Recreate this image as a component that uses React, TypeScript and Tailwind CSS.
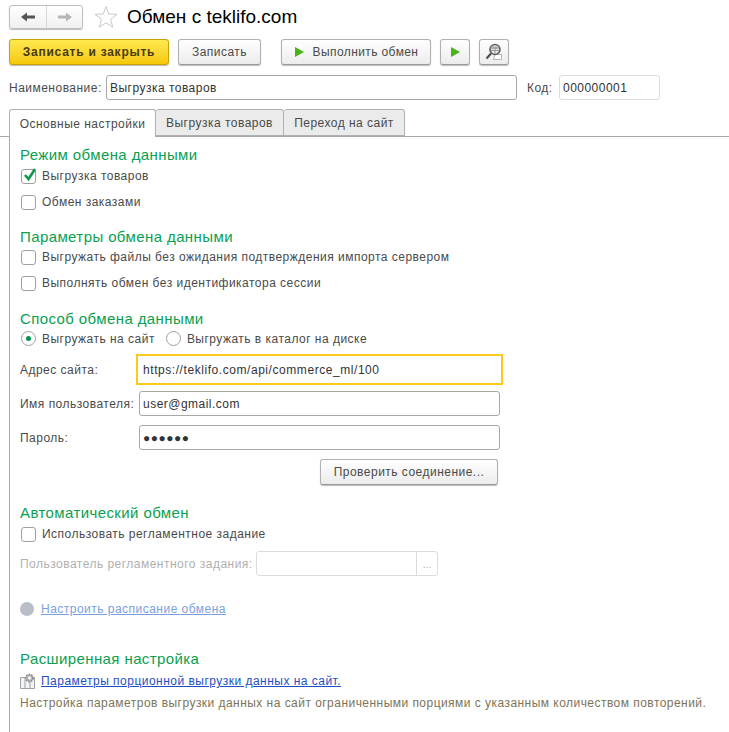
import { ReactNode } from "react";

function Btn({ w, className = "", children }: { w: string; className?: string; children: ReactNode }) {
  return (
    <div className={`${w} h-[26px] flex items-center justify-center rounded-[3px] border border-[#b0b0b0] border-b-[#999] bg-gradient-to-b from-white to-[#ececec] shadow-[0_1px_1px_#bbb] text-[#4a4a4a] ${className}`}>
      {children}
    </div>
  );
}

function Play() {
  return (
    <svg width="11" height="12" viewBox="0 0 11 12">
      <path d="M1 1 L10 6 L1 11 Z" fill="#4cb217" />
    </svg>
  );
}

function Check({ label, checked = false }: { label: string; checked?: boolean }) {
  return (
    <div className="flex items-center h-[14px] text-[#4a4a4a]">
      <div className="relative w-[15px] h-[15px] rounded-[3px] border border-[#a0a0a0] bg-white mr-[6px]">
        {checked && (
          <svg className="absolute left-[1px] top-[-3px]" width="14" height="15" viewBox="0 0 14 15">
            <path d="M2 8 L5.5 12 L12 2" fill="none" stroke="#0b9a4a" strokeWidth="2.6" />
          </svg>
        )}
      </div>
      <span>{label}</span>
    </div>
  );
}

function Radio({ label, on = false }: { label: string; on?: boolean }) {
  return (
    <div className="flex items-center text-[#4a4a4a]">
      <div className="w-[15px] h-[15px] rounded-full border border-[#a0a0a0] bg-white mr-[6px] flex items-center justify-center">
        {on && <div className="w-[5px] h-[5px] rounded-full bg-[#0b8f50]" />}
      </div>
      <span>{label}</span>
    </div>
  );
}

function Heading({ children, className = "" }: { children: ReactNode; className?: string }) {
  return <div className={`text-[15px] leading-[18px] tracking-[0.4px] text-[#0aa050] ${className}`}>{children}</div>;
}

function Field({ label, value, focus = false }: { label: string; value: ReactNode; focus?: boolean }) {
  return (
    <div className="flex items-center">
      <div className="w-[116px] text-[#4a4a4a] whitespace-nowrap">{label}</div>
      {focus ? (
        <div className="w-[367px] h-[31px] border-[2px] border-[#fdc91a] bg-white flex items-center pl-[5px] text-[#333] tracking-[0.56px]">{value}</div>
      ) : (
        <div className="ml-[3px] w-[361px] h-[25px] rounded-[3px] border border-[#a8a8a8] bg-white flex items-center pl-[3px] text-[#333]">{value}</div>
      )}
    </div>
  );
}

export default function App() {
  return (
    <div className="w-[729px] h-[732px] bg-white overflow-hidden text-[12px] leading-[14px] tracking-[0.48px]" style={{ fontFamily: '"Liberation Sans", Arial, sans-serif' }}>
      {/* заголовок */}
      <div className="flex items-center pl-[9px] pt-[5px] h-[29px]">
        <div className="w-[74px] h-[24px] flex rounded-[3px] border border-[#c0c0c0] bg-gradient-to-b from-white to-[#f0f0f0] shadow-[0_1px_1px_#bbb]">
          <div className="w-[37px] flex items-center justify-center border-r border-[#d8d8d8]">
            <svg width="14" height="10" viewBox="0 0 14 10"><path d="M0 5 L6 0.5 V3.5 H14 V6.5 H6 V9.5 Z" fill="#555" /></svg>
          </div>
          <div className="flex-1 flex items-center justify-center">
            <svg width="14" height="10" viewBox="0 0 14 10"><path d="M14 5 L8 0.5 V3.5 H0 V6.5 H8 V9.5 Z" fill="#b5b5b5" /></svg>
          </div>
        </div>
        <svg className="ml-[11px]" width="24" height="24" viewBox="0 0 24 24">
          <path d="M12 1.5 L14.8 9 L23 9.3 L16.5 14.4 L18.8 22.3 L12 17.8 L5.2 22.3 L7.5 14.4 L1 9.3 L9.2 9 Z" fill="none" stroke="#c9c9c9" strokeWidth="1" />
        </svg>
        <div className="ml-[9px] text-[19px] leading-[22px] tracking-normal text-black">Обмен с teklifo.com</div>
      </div>

      {/* кнопки */}
      <div className="flex mt-[10px] pl-[9px]">
        <div className="w-[160px] h-[26px] flex items-center justify-center rounded-[3px] border border-[#c9a200] bg-gradient-to-b from-[#ffe94d] to-[#f5c800] shadow-[0_1px_1px_#bbb] font-bold tracking-[0.75px] text-[#4a3a10]">Записать и закрыть</div>
        <Btn w="w-[83px]" className="ml-[9px]">Записать</Btn>
        <Btn w="w-[150px]" className="ml-[20px] gap-[8px] tracking-[0.4px]"><Play />Выполнить обмен</Btn>
        <Btn w="w-[30px]" className="ml-[9px]"><Play /></Btn>
        <Btn w="w-[30px]" className="ml-[9px]">
          <svg width="18" height="18" viewBox="0 0 18 18">
            <path d="M10 11.5 H16.5 V16.5 H8.5 Z" fill="#fff" stroke="#a9b4bb" />
            <circle cx="10" cy="6.5" r="5" fill="#e4e6e8" stroke="#5f5f5f" strokeWidth="1.6" />
            <path d="M6.5 3.5 H13.5 V6 H6.5 Z" fill="#a9a9a9" />
            <path d="M6 7.5 H14 M10 5.5 V11" stroke="#9a9a9a" strokeWidth="1" />
            <path d="M6 10.5 L1.5 15.5" stroke="#4a4a4a" strokeWidth="2" />
          </svg>
        </Btn>
      </div>

      {/* наименование */}
      <div className="flex items-center mt-[10px] pl-[9px] text-[#4a4a4a]">
        <div className="w-[97px]">Наименование:</div>
        <div className="w-[411px] h-[25px] rounded-[3px] border border-[#a8a8a8] flex items-center pl-[3px] text-[#333]">Выгрузка товаров</div>
        <div className="ml-[10px] w-[32px]">Код:</div>
        <div className="w-[101px] h-[25px] rounded-[3px] border border-[#dcdcdc] flex items-center pl-[3px] text-[#333]">000000001</div>
      </div>

      {/* вкладки */}
      <div className="flex mt-[9px] pl-[9px] h-[28px] border-b border-[#a8a8a8]">
        <div className="relative z-10 w-[147px] h-[28px] flex items-center justify-center rounded-t-[3px] border border-b-0 border-[#b0b0b0] bg-white text-[#4a4a4a]">Основные настройки</div>
        <div className="w-[128px] flex items-center justify-center rounded-t-[3px] border border-l-0 border-[#b0b0b0] bg-[#ebebeb] text-[#4a4a4a]">Выгрузка товаров</div>
        <div className="w-[121px] flex items-center justify-center rounded-t-[3px] border border-l-0 border-[#b0b0b0] bg-[#ebebeb] text-[#4a4a4a]">Переход на сайт</div>
      </div>

      {/* панель */}
      <div className="ml-[9px] h-[600px] border-l border-[#a8a8a8] pl-[10px] pt-[9px]">
        <Heading>Режим обмена данными</Heading>
        <div className="mt-[5px] pl-[1px]"><Check label="Выгрузка товаров" checked /></div>
        <div className="mt-[12px] pl-[1px]"><Check label="Обмен заказами" /></div>

        <Heading className="mt-[19px]">Параметры обмена данными</Heading>
        <div className="mt-[4px] pl-[1px]"><Check label="Выгружать файлы без ожидания подтверждения импорта сервером" /></div>
        <div className="mt-[12px] pl-[1px]"><Check label="Выполнять обмен без идентификатора сессии" /></div>

        <Heading className="mt-[20px]">Способ обмена данными</Heading>
        <div className="mt-[3px] pl-[1px] flex gap-[11px]">
          <Radio label="Выгружать на сайт" on />
          <Radio label="Выгружать в каталог на диске" />
        </div>

        <div className="mt-[8px]"><Field label="Адрес сайта:" focus value="https://teklifo.com/api/commerce_ml/100" /></div>
        <div className="mt-[6px]"><Field label="Имя пользователя:" value="user@gmail.com" /></div>
        <div className="mt-[9px]"><Field label="Пароль:" value={<span className="tracking-[0.5px] text-[#333]">●●●●●●</span>} /></div>

        <div className="mt-[9px] pl-[300px]">
          <Btn w="w-[178px]">Проверить соединение...</Btn>
        </div>

        <Heading className="mt-[19px]">Автоматический обмен</Heading>
        <div className="mt-[5px] pl-[1px]"><Check label="Использовать регламентное задание" /></div>

        <div className="flex items-center mt-[10px] text-[#b0b0b0]">
          <div className="w-[236px] whitespace-nowrap">Пользователь регламентного задания:</div>
          <div className="w-[182px] h-[25px] flex rounded-[3px] border border-[#dcdcdc]">
            <div className="flex-1 border-r border-[#dcdcdc]" />
            <div className="w-[20px] text-center text-[10px] leading-[26px] tracking-normal">...</div>
          </div>
        </div>

        <div className="flex items-center mt-[26px]">
          <svg className="mr-[7px]" width="14" height="14" viewBox="0 0 14 14">
            <circle cx="7" cy="7" r="7" fill="#b9bec9" />
            <path d="M4 5 L5 6 M10 5 L9 6 M7 10 V11" stroke="#d3b8c0" strokeWidth="1" />
          </svg>
          <span className="text-[#7a9fe0] underline">Настроить расписание обмена</span>
        </div>

        <Heading className="mt-[34px]">Расширенная настройка</Heading>
        <div className="flex items-center mt-[5px]">
          <svg className="mr-[6px]" width="15" height="16" viewBox="0 0 15 16">
            <path d="M0.5 4.5 H14.5 V15.5 H0.5 Z M5 4.5 V15.5 M10 4.5 V15.5" fill="#f4f4f4" stroke="#9aa3a8" />
            <circle cx="9.5" cy="5" r="3.6" fill="#b5b5b5" stroke="#8a8a8a" strokeWidth="1.6" strokeDasharray="1.6 1" />
            <circle cx="9.5" cy="5" r="1.4" fill="#fff" />
          </svg>
          <span className="text-[#1f4fbf] underline">Параметры порционной выгрузки данных на сайт.</span>
        </div>
        <div className="mt-[7px] text-[#7d7457] whitespace-nowrap tracking-[0.46px]">Настройка параметров выгрузки данных на сайт ограниченными порциями с указанным количеством повторений.</div>
      </div>
    </div>
  );
}
